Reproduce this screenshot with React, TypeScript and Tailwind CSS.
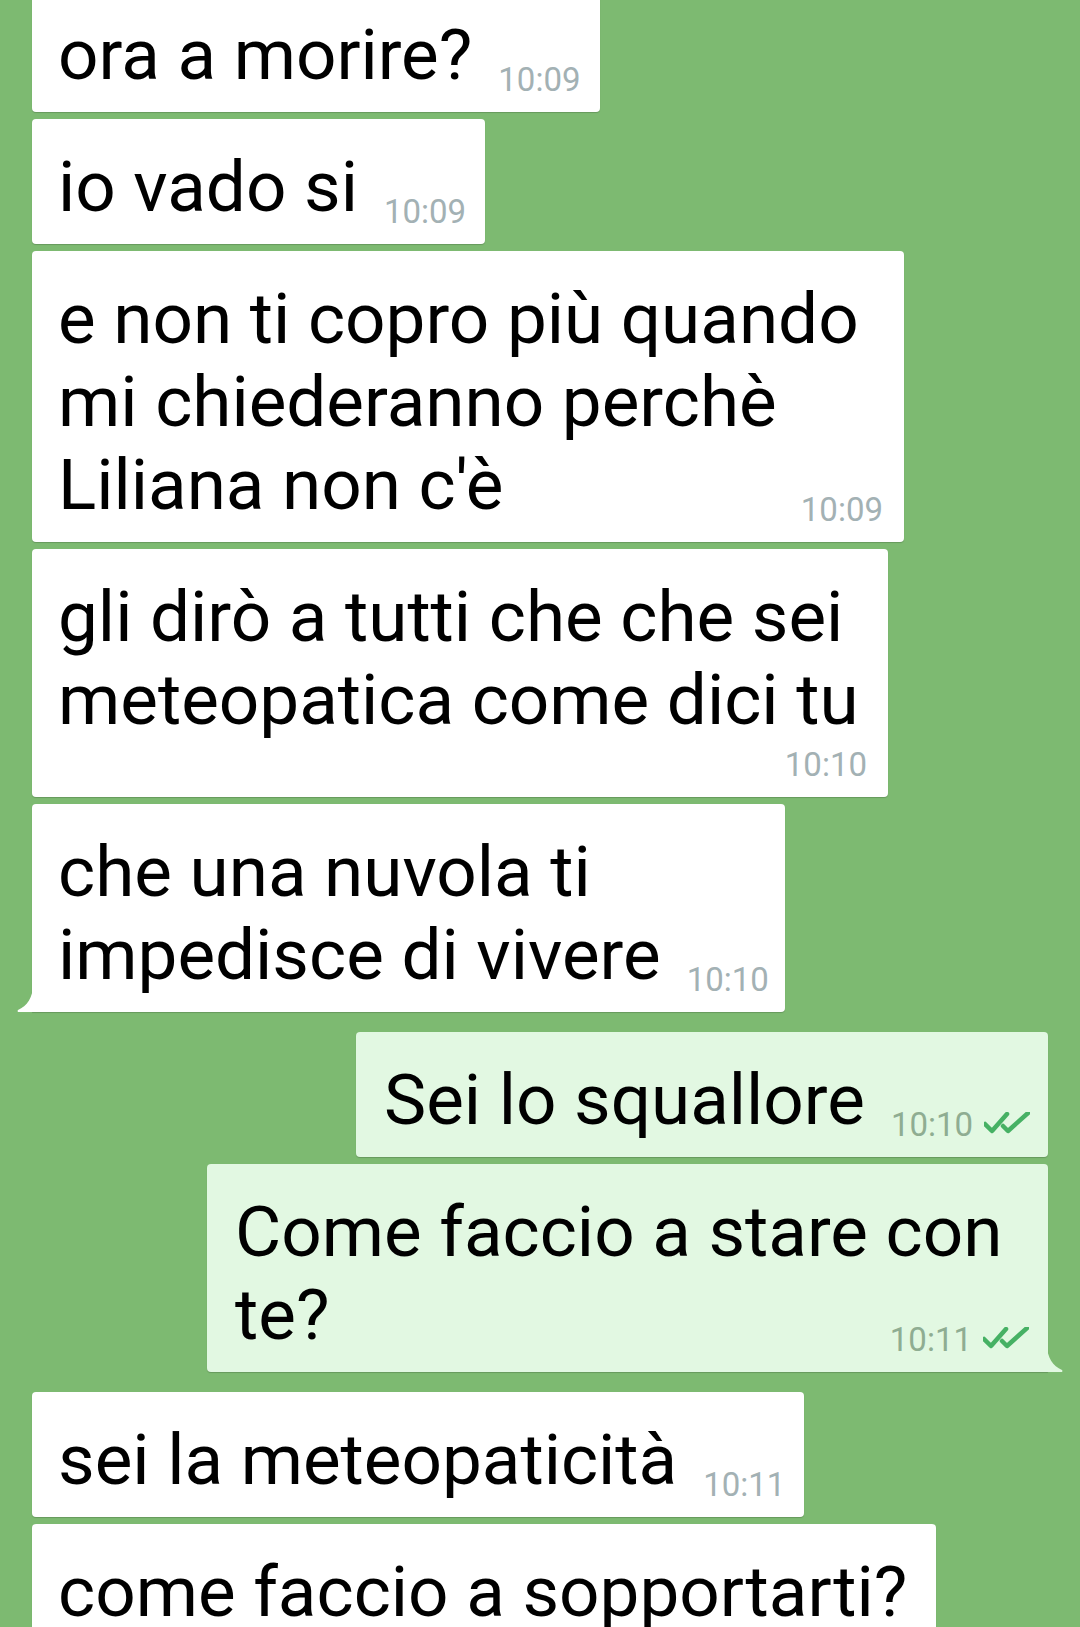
import React from 'react';

type Msg = {
  lines: string[];
  time: string;
  out?: boolean;
  width: string;
  below?: boolean;
  tail?: boolean;
  groupStart?: boolean;
};

const MESSAGES: Msg[] = [
  { lines: ['ora a morire?'], time: '10:09', width: 'w-[568px]' },
  { lines: ['io vado si'], time: '10:09', width: 'w-[453px]' },
  {
    lines: ['e non ti copro più quando', 'mi chiederanno perchè', "Liliana non c'è"],
    time: '10:09',
    width: 'w-[872px]',
  },
  {
    lines: ['gli dirò a tutti che che sei', 'meteopatica come dici tu'],
    time: '10:10',
    width: 'w-[856px]',
    below: true,
  },
  {
    lines: ['che una nuvola ti', 'impedisce di vivere'],
    time: '10:10',
    width: 'w-[753px]',
    tail: true,
  },
  { lines: ['Sei lo squallore'], time: '10:10', out: true, width: 'w-[692px]', groupStart: true },
  {
    lines: ['Come faccio a stare con', 'te?'],
    time: '10:11',
    out: true,
    width: 'w-[841px]',
    tail: true,
  },
  { lines: ['sei la meteopaticità'], time: '10:11', width: 'w-[772px]', groupStart: true },
  { lines: ['come faccio a sopportarti?'], time: '10:11', width: 'w-[904px]', below: true },
];

function DoubleTick() {
  return (
    <svg width="46" height="22" viewBox="0 0 46 22" className="mb-[7px] ml-[11px] shrink-0">
      <path
        d="M1 12 L8 19 L23 2 M19 14 L24 19 L44 1"
        fill="none"
        stroke="#46b164"
        strokeWidth="4.5"
        strokeLinecap="round"
        strokeLinejoin="round"
      />
    </svg>
  );
}

function Stamp({ msg }: { msg: Msg }) {
  return (
    <span className="flex shrink-0 items-end">
      <span
        className={`text-[33px] leading-[32px] ${msg.out ? 'text-[#8fad92]' : 'text-[#a3b1b4]'}`}
      >
        {msg.time}
      </span>
      {msg.out && <DoubleTick />}
    </span>
  );
}

function Tail({ out }: { out?: boolean }) {
  if (out) {
    return (
      <svg
        width="16"
        height="32"
        viewBox="0 0 16 32"
        className="absolute -right-[15px] bottom-0"
      >
        <path d="M0 0 L0 4 C0 18 6 26 15 30 Q16 31 15 32 L0 32 Z" fill="#e2f8e2" />
      </svg>
    );
  }
  return (
    <svg width="16" height="32" viewBox="0 0 16 32" className="absolute -left-[15px] bottom-0">
      <path d="M16 0 L16 4 C16 18 10 26 1 30 Q0 31 1 32 L16 32 Z" fill="#ffffff" />
    </svg>
  );
}

function Bubble({ msg }: { msg: Msg }) {
  const last = msg.lines.length - 1;
  const corner = msg.tail ? (msg.out ? 'rounded-br-none' : 'rounded-bl-none') : '';
  return (
    <div
      className={`relative ${msg.width} rounded-[4px] pt-[26px] pb-[16px] shadow-[0_1px_1px_rgba(0,0,0,0.18)] ${corner} ${
        msg.out ? 'self-end bg-[#e2f8e2] pl-[28px] pr-[19px]' : 'self-start bg-white pl-[26px] pr-[21px]'
      }`}
    >
      {msg.lines.map((line, i) =>
        i === last && !msg.below ? (
          <div key={i} className="flex items-end justify-between gap-[26px]">
            <span className="whitespace-nowrap">{line}</span>
            <Stamp msg={msg} />
          </div>
        ) : (
          <div key={i} className="whitespace-nowrap">
            {line}
          </div>
        )
      )}
      {msg.below && (
        <div className="flex justify-end pt-[8px]">
          <Stamp msg={msg} />
        </div>
      )}
      {msg.tail && <Tail out={msg.out} />}
    </div>
  );
}

export default function App() {
  return (
    <div className="h-[1627px] w-[1080px] overflow-hidden bg-[#7dba71] font-['Roboto','Liberation_Sans',sans-serif]">
      <div className="-mt-[13px] flex flex-col px-[32px] text-[71px] leading-[83px] text-black">
        {MESSAGES.map((m, i) => (
          <div key={i} className={`flex flex-col ${i === 0 ? '' : m.groupStart ? 'mt-[20px]' : 'mt-[7px]'}`}>
            <Bubble msg={m} />
          </div>
        ))}
      </div>
    </div>
  );
}
